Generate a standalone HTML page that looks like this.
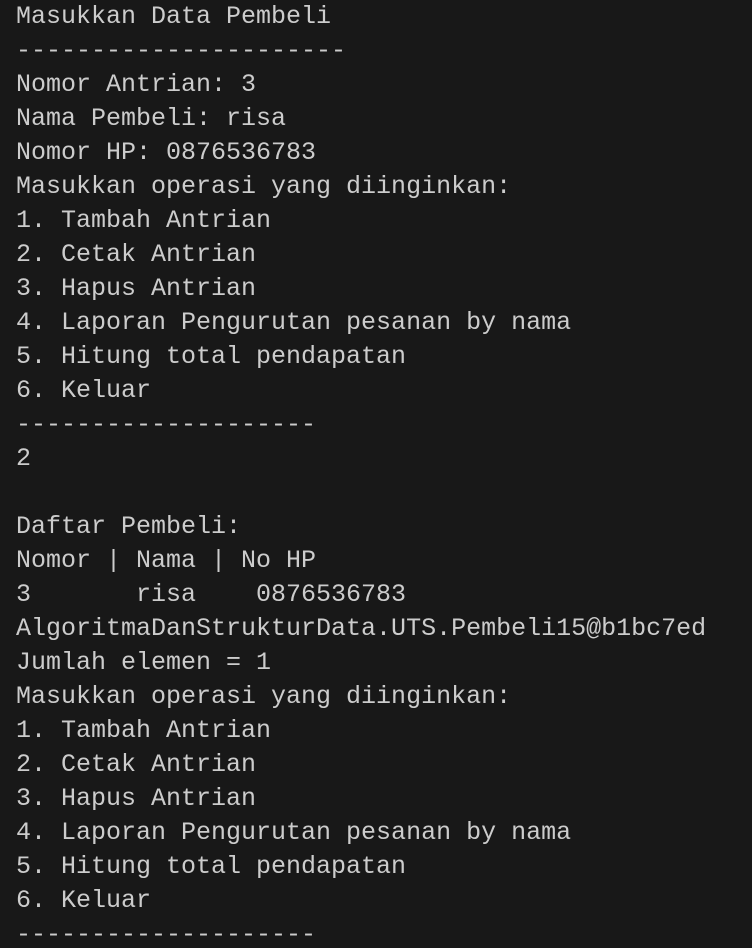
<!DOCTYPE html>
<html><head><meta charset="utf-8"><style>
html,body{margin:0;padding:0;background:#181818;width:752px;height:948px;overflow:hidden}
pre{margin:0;padding:0 0 0 16px;font-family:"Liberation Mono",monospace;font-size:25px;line-height:34px;color:#cccccc;white-space:pre}
</style></head><body><pre>Masukkan Data Pembeli
----------------------
Nomor Antrian: 3
Nama Pembeli: risa
Nomor HP: 0876536783
Masukkan operasi yang diinginkan:
1. Tambah Antrian
2. Cetak Antrian
3. Hapus Antrian
4. Laporan Pengurutan pesanan by nama
5. Hitung total pendapatan
6. Keluar
--------------------
2

Daftar Pembeli:
Nomor | Nama | No HP
3       risa    0876536783
AlgoritmaDanStrukturData.UTS.Pembeli15@b1bc7ed
Jumlah elemen = 1
Masukkan operasi yang diinginkan:
1. Tambah Antrian
2. Cetak Antrian
3. Hapus Antrian
4. Laporan Pengurutan pesanan by nama
5. Hitung total pendapatan
6. Keluar
--------------------</pre></body></html>
